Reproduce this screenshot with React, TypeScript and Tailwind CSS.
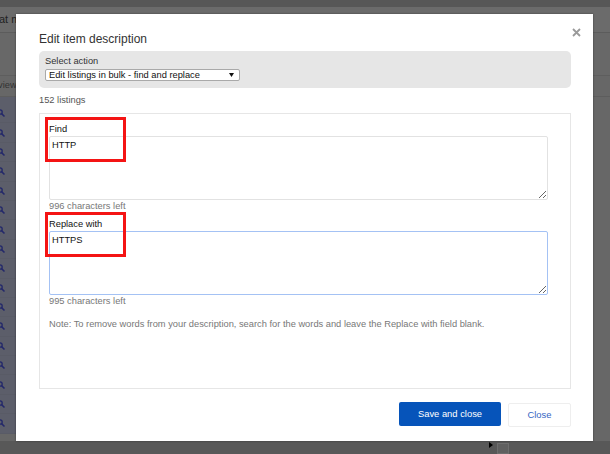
import React from "react";

const font = { fontFamily: '"Liberation Sans", Arial, sans-serif' };

function RowIcon() {
  return (
    <svg width="8" height="8" viewBox="0 0 8 8" className="-ml-[3px]">
      <circle cx="3" cy="3" r="2.2" fill="none" stroke="#23286a" strokeWidth="1.3" />
      <line x1="4.6" y1="4.6" x2="7.5" y2="7.5" stroke="#23286a" strokeWidth="1.5" />
    </svg>
  );
}

function Field({
  label,
  value,
  left,
  focused,
}: {
  label: string;
  value: string;
  left: string;
  focused?: boolean;
}) {
  return (
    <div className="relative flex flex-col">
      <div className="text-[9.3px] leading-[11px] text-[#111]">{label}</div>
      <textarea
        readOnly
        defaultValue={value}
        className={
          "mt-[1px] h-[64px] w-[499px] rounded-[2px] border bg-white px-[2px] pt-[3px] text-[9.3px] leading-[11px] text-[#111] outline-none " +
          (focused ? "border-[#a4c2f4]" : "border-[#e2e2e2]")
        }
        style={font}
      />
      <div className="mt-[1px] text-[9.3px] leading-[11px] text-[#777]">{left}</div>
      <div className="pointer-events-none absolute -left-[4px] -top-[7px] h-[45px] w-[81px] border-[3px] border-[#f41414]" />
    </div>
  );
}

export default function App() {
  const rows = Array.from({ length: 17 });
  return (
    <div className="relative h-[454px] w-[610px] overflow-hidden bg-[#676767]" style={font}>
      {/* background page */}
      <div className="flex h-full flex-col">
        <div className="h-[7px] bg-[#575757]" />
        <div className="flex h-[26px] items-center border-b border-[#5c5c5c] bg-[#6b6b6b]">
          <span className="-ml-[1px] text-[11px] text-[#222]">at m</span>
        </div>
        <div className="h-[43px] border-b border-[#5e5e5e] bg-[#686868]" />
        <div className="flex h-[21px] items-center border-b border-[#5d5d5d]">
          <span className="-ml-[2px] text-[9.3px] text-[#333]">view</span>
        </div>
        <div className="flex w-[16px] flex-col bg-[#5c5e6a] pt-[7px]">
          {rows.map((_, i) => (
            <div key={i} className="flex h-[19.4px] items-center border-b border-[#55576180]">
              <RowIcon />
            </div>
          ))}
        </div>
        <div className="flex-1" />
      </div>
      <div className="absolute bottom-0 left-0 h-[13px] w-full bg-[#585858]">
        <div className="absolute left-[489px] top-[1px] h-0 w-0 border-y-[3px] border-l-[4px] border-y-transparent border-l-black" />
        <div className="absolute left-[497px] top-[2px] h-[11px] w-[12px] bg-[#606060] border border-[#6e6e6e]" />
      </div>

      {/* modal */}
      <div className="absolute left-[16px] top-[14px] flex h-[427px] w-[577px] flex-col bg-white pl-[23px] pr-[22px] pt-[18px] shadow-[0_0_2px_rgba(0,0,0,0.4)]">
        <svg
          width="9"
          height="9"
          viewBox="0 0 9 9"
          className="absolute right-[12px] top-[14px]"
        >
          <path d="M1 1 L8 8 M8 1 L1 8" stroke="#9a9a9a" strokeWidth="1.8" />
        </svg>
        <div className="text-[12px] leading-[14px] text-[#333]">Edit item description</div>

        <div className="mt-[5px] flex h-[37px] flex-col rounded-[5px] bg-[#e6e6e6] px-[6px] pt-[5px]">
          <div className="text-[9.3px] leading-[11px] text-[#333]">Select action</div>
          <div className="mt-[2px] flex h-[12px] w-[195px] items-center justify-between rounded-[2px] border border-[#a9a9a9] bg-white pl-[3px] pr-[5px]">
            <span className="text-[9.3px] leading-[10px] text-[#111]">
              Edit listings in bulk - find and replace
            </span>
            <svg width="5" height="4" viewBox="0 0 5 4">
              <path d="M0 0 L5 0 L2.5 4 Z" fill="#111" />
            </svg>
          </div>
        </div>

        <div className="mt-[7px] text-[9.3px] leading-[11px] text-[#555]">152 listings</div>

        <div className="mt-[7px] flex h-[276px] flex-col border border-[#e6e6e6] pl-[9px] pt-[10px]">
          <Field label="Find" value="HTTP" left="996 characters left" />
          <div className="mt-[7px]">
            <Field label="Replace with" value="HTTPS" left="995 characters left" focused />
          </div>
          <div className="mt-[12px] text-[9.3px] leading-[11px] text-[#777]">
            Note: To remove words from your description, search for the words and leave the Replace with field blank.
          </div>
        </div>

        <div className="mt-[13px] flex justify-end gap-[7px]">
          <button className="h-[24px] w-[102px] rounded-[2px] bg-[#0654ba] text-[9.4px] text-white">
            Save and close
          </button>
          <button className="mt-[1px] h-[24px] w-[63px] rounded-[2px] border border-[#eeeeee] bg-white text-[9.4px] text-[#3665c3]">
            Close
          </button>
        </div>
      </div>
    </div>
  );
}
